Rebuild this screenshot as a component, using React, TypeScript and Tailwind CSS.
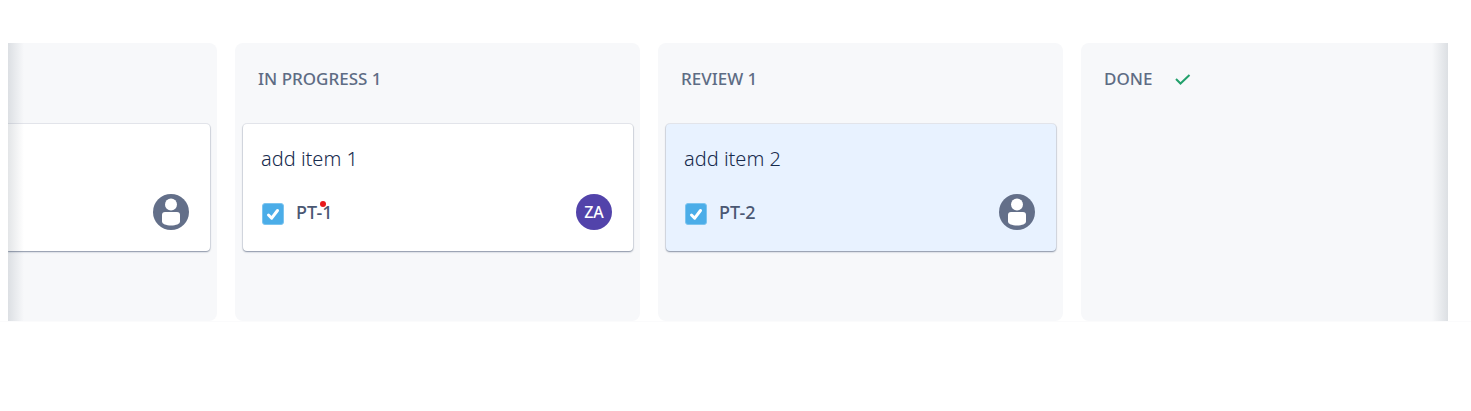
import type { ReactNode } from "react";

function UserAvatar() {
  return (
    <svg viewBox="0 0 36 36" className="size-9 shrink-0" role="img" aria-label="Unassigned">
      <circle cx="18" cy="18" r="18" fill="#636f89" />
      <circle cx="18" cy="10.5" r="6" fill="#fff" />
      <path
        d="M9 21a3 3 0 0 1 3-3h12a3 3 0 0 1 3 3v6.500c0 2.400-4 4-9 4s-9-1.600-9-4Z"
        fill="#fff"
      />
    </svg>
  );
}

function InitialsAvatar({ initials }: { initials: string }) {
  return (
    <span className="flex size-9 shrink-0 items-center justify-center rounded-full bg-[#5243aa] text-base font-medium text-white">
      {initials}
    </span>
  );
}

function Cursor() {
  return <span className="absolute top-px left-6 size-1.5 rounded-full bg-[#e8191c]" />;
}

type CardProps = {
  title?: string;
  issueKey?: string;
  selected?: boolean;
  marked?: boolean;
  avatar: ReactNode;
};

function Card({ title, issueKey, selected, marked, avatar }: CardProps) {
  return (
    <article
      className={`flex h-[127px] flex-col justify-between px-[18px] pt-5 pb-[21px] shadow-[0_1px_2px_0_rgba(9,30,66,0.3),0_1px_1px_0_rgba(9,30,66,0.15),0_0_0_1px_rgba(9,30,66,0.07)] ${
        selected ? "bg-[#e8f2ff]" : "bg-white"
      } ${title ? "rounded-[4px]" : "rounded-r-[4px]"}`}
    >
      <h3 className="h-[30px] text-xl leading-[30px] font-light text-[#172b4d]">{title}</h3>
      <div className="flex h-9 items-center justify-between pr-[3px]">
        {issueKey ? (
          <label className="flex items-center gap-3 text-lg leading-6 font-medium text-[#4a5873]">
            <span className="grid pt-1 pl-px">
              <input
                type="checkbox"
                defaultChecked
                className="peer col-start-1 row-start-1 size-[22px] appearance-none rounded-[3px] border border-[#7cc4ef] bg-white checked:bg-[#4bade8]"
              />
              <svg
                viewBox="0 0 22 22"
                className="pointer-events-none invisible col-start-1 row-start-1 size-[22px] peer-checked:visible"
                fill="none"
                stroke="#fff"
                strokeWidth="3"
                strokeLinecap="round"
                strokeLinejoin="round"
                aria-hidden="true"
              >
                <path d="m6.500 12 3.200 3.200L15.500 7.500" />
              </svg>
            </span>
            <span className="relative">
              {issueKey}
              {marked && <Cursor />}
            </span>
          </label>
        ) : (
          <span />
        )}
        {avatar}
      </div>
    </article>
  );
}

type ColumnProps = {
  title?: string;
  edge?: "left" | "right";
  done?: boolean;
  children?: ReactNode;
};

function Column({ title, edge, done, children }: ColumnProps) {
  const shape =
    edge === "left"
      ? "rounded-r-[8px] pr-[7px]"
      : edge === "right"
        ? "rounded-l-[8px] pl-2"
        : "rounded-[8px] pl-2 pr-[7px]";
  return (
    <section className={`min-w-0 bg-[#f7f8fa] pb-[70px] ${shape}`}>
      <h2 className="flex h-[81px] items-center gap-[22px] pb-[9px] pl-[15px] text-[17px] leading-6 font-medium whitespace-nowrap text-[#5e6c84]">
        {title}
        {done && (
          <svg
            viewBox="0 0 18 18"
            className="size-[18px]"
            fill="none"
            stroke="#22a06b"
            strokeWidth="2"
            aria-label="Completed"
            role="img"
          >
            <path d="m2 9 4.500 4.500L15.500 5" />
          </svg>
        )}
      </h2>
      {children}
    </section>
  );
}

export default function App() {
  return (
    <main className="min-h-screen bg-white pt-[43px] pr-[23px] pl-2 font-['Noto_Sans','Open_Sans',sans-serif]">
      <div className="relative grid grid-cols-[209fr_405fr_405fr_367fr] gap-[18px] overflow-hidden">
        <Column edge="left">
          <Card avatar={<UserAvatar />} />
        </Column>
        <Column title="IN PROGRESS 1">
          <Card title="add item 1" issueKey="PT-1" marked avatar={<InitialsAvatar initials="ZA" />} />
        </Column>
        <Column title="REVIEW 1">
          <Card title="add item 2" issueKey="PT-2" selected avatar={<UserAvatar />} />
        </Column>
        <Column title="DONE" edge="right" done />
        <div className="pointer-events-none absolute inset-y-0 left-0 w-4 bg-linear-to-r from-[#172b3d]/12 via-[#172b3d]/6 to-transparent" />
        <div className="pointer-events-none absolute inset-y-0 right-0 w-4 bg-linear-to-l from-[#172b3d]/12 via-[#172b3d]/6 to-transparent" />
      </div>
      <div className="-mr-[23px] -ml-2 h-px bg-[#fbfbfc]" />
    </main>
  );
}
